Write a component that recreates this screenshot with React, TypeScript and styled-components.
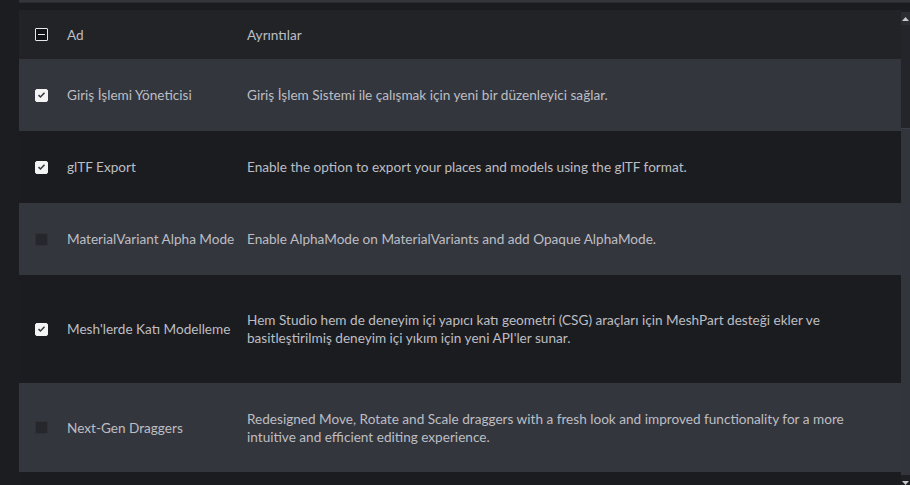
import React from "react";
import styled, { createGlobalStyle } from "styled-components";

const Global = createGlobalStyle`
  html, body { margin: 0; padding: 0; background: #1d1e22; }
  body { width: 910px; height: 485px; overflow: hidden; font-family: "Lato", "Noto Sans", sans-serif; }
`;

const Page = styled.div`
  display: flex;
  width: 910px;
  height: 485px;
  background: #1d1e22;
  overflow: hidden;
`;

const Gutter = styled.div`
  width: 19px;
  flex: none;
  background: #1c1d21;
`;

const Main = styled.div`
  flex: 1;
  display: flex;
  flex-direction: column;
  min-width: 0;
`;

const TopEdge = styled.div`
  height: 2px;
  background: #34353a;
  border-bottom: 1px solid #2a2b30;
  flex: none;
`;

const TopGap = styled.div`
  height: 7px;
  flex: none;
  background: #1b1c20;
`;

const Body = styled.div`
  flex: 1;
  display: flex;
  min-height: 0;
`;

const Table = styled.div`
  flex: 1;
  display: flex;
  flex-direction: column;
  overflow: hidden;
`;

const Row = styled.div<{ $h: number; $bg: string }>`
  display: grid;
  grid-template-columns: 48px 180px 1fr;
  align-items: center;
  height: ${(p) => p.$h}px;
  flex: none;
  background: ${(p) => p.$bg};
  color: #bdbec3;
  font-size: 13.6px;
  line-height: 18px;
`;

const CheckCell = styled.div`
  display: flex;
  justify-content: center;
  align-items: center;
  padding-right: 4px;
`;

const Cell = styled.div`
  padding-right: 10px;
  white-space: nowrap;
`;

const Box = styled.div<{ $checked?: boolean }>`
  width: 13px;
  height: 13px;
  box-sizing: border-box;
  border-radius: 2px;
  display: flex;
  align-items: center;
  justify-content: center;
  background: ${(p) => (p.$checked ? "#f4f4f5" : "#26272d")};
  border: 1px solid ${(p) => (p.$checked ? "#f4f4f5" : "#303137")};
`;

const HeaderBox = styled.div`
  width: 13px;
  height: 13px;
  box-sizing: border-box;
  border: 1px solid #e8e8ea;
  border-radius: 1px;
  background: #121316;
  display: flex;
  align-items: center;
  justify-content: center;
  &::after {
    content: "";
    width: 7px;
    height: 1.5px;
    background: #e8e8ea;
  }
`;

const Scrollbar = styled.div`
  width: 9px;
  flex: none;
  display: flex;
  flex-direction: column;
  background: #1e1f23;
  padding-top: 2px;
`;

const ArrowBtn = styled.div`
  height: 13px;
  display: flex;
  align-items: center;
  justify-content: center;
  background: #2c2d33;
  flex: none;
`;

const Track = styled.div`
  height: 103px;
  background: #23252a;
  flex: none;
`;

const Thumb = styled.div`
  flex: 1;
  background: #33353c;
  border-top: 1px solid #3c3e45;
`;

const BottomArrow = styled.div`
  height: 10px;
  display: flex;
  align-items: flex-end;
  justify-content: center;
  background: #1e1f23;
  flex: none;
`;

const Check = () => (
  <svg width="9" height="8" viewBox="0 0 9 8">
    <path d="M1.5 4.2 L3.5 6 L7.5 1.8" stroke="#3a3b40" strokeWidth="1.6" fill="none" />
  </svg>
);

const rows = [
  { name: "Giriş İşlemi Yöneticisi", detail: ["Giriş İşlem Sistemi ile çalışmak için yeni bir düzenleyici sağlar."], checked: true, h: 72, light: true },
  { name: "glTF Export", detail: ["Enable the option to export your places and models using the glTF format."], checked: true, h: 72, light: false },
  { name: "MaterialVariant Alpha Mode", detail: ["Enable AlphaMode on MaterialVariants and add Opaque AlphaMode."], checked: false, h: 72, light: true },
  { name: "Mesh'lerde Katı Modelleme", detail: ["Hem Studio hem de deneyim içi yapıcı katı geometri (CSG) araçları için MeshPart desteği ekler ve", "basitleştirilmiş deneyim içi yıkım için yeni API'ler sunar."], checked: true, h: 108, light: false },
  { name: "Next-Gen Draggers", detail: ["Redesigned Move, Rotate and Scale draggers with a fresh look and improved functionality for a more", "intuitive and efficient editing experience."], checked: false, h: 89, light: true },
];

export default function App() {
  return (
    <Page>
      <Global />
      <Gutter />
      <Main>
        <TopEdge />
        <TopGap />
        <Body>
          <Table>
            <Row $h={49} $bg="#222327">
              <CheckCell><HeaderBox /></CheckCell>
              <Cell>Ad</Cell>
              <Cell>Ayrıntılar</Cell>
            </Row>
            {rows.map((r) => (
              <Row key={r.name} $h={r.h} $bg={r.light ? "#34363e" : "#1b1c20"}>
                <CheckCell>
                  <Box $checked={r.checked}>{r.checked && <Check />}</Box>
                </CheckCell>
                <Cell>{r.name}</Cell>
                <Cell>
                  {r.detail.map((d) => (
                    <div key={d}>{d}</div>
                  ))}
                </Cell>
              </Row>
            ))}
            <Row $h={40} $bg="#1b1c20" />
          </Table>
          <Scrollbar>
            <ArrowBtn>
              <svg width="7" height="4" viewBox="0 0 7 4"><path d="M0 4 L3.5 0 L7 4 Z" fill="#c9cacd" /></svg>
            </ArrowBtn>
            <Track />
            <Thumb />
            <BottomArrow>
              <svg width="7" height="4" viewBox="0 0 7 4"><path d="M0 0 L3.5 4 L7 0 Z" fill="#c9cacd" /></svg>
            </BottomArrow>
          </Scrollbar>
        </Body>
      </Main>
    </Page>
  );
}
